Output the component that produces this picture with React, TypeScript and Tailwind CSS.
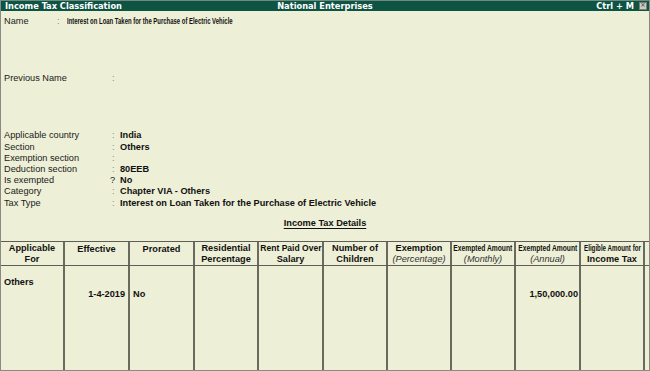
import React from "react";

const Row = ({ label, sep = ":", value }: { label: string; sep?: string; value?: string }) => (
  <div className="flex h-[11.2px] items-center leading-[11.2px]">
    <div className="w-[108px] shrink-0 text-[#1a1a1a]">{label}</div>
    <div className={`w-[8px] shrink-0 ${sep === "?" ? "-ml-[2px] mr-[2px] text-[#1a1a1a]" : "text-[#8a8a80]"}`}>{sep}</div>
    <div className="font-bold whitespace-nowrap text-[#111]">{value}</div>
  </div>
);

const Cond = ({ children, scale }: { children: React.ReactNode; scale: string }) => (
  <span className={`inline-block whitespace-nowrap text-[8.6px] origin-center ${scale}`}>{children}</span>
);

export default function App() {
  const colW = ["w-[64px]", "w-[65px]", "w-[65px]", "w-[64px]", "w-[65px]", "w-[64px]", "w-[64px]", "w-[64px]", "w-[65px]", "w-[64px]"];
  const headers: [React.ReactNode, React.ReactNode][] = [
    [<span>Applicable</span>, <span>For</span>],
    [<span>Effective</span>, null],
    [<span>Prorated</span>, null],
    [<span>Residential</span>, <span>Percentage</span>],
    [<span className="inline-block whitespace-nowrap scale-x-[0.93]">Rent Paid Over</span>, <span>Salary</span>],
    [<span>Number of</span>, <span>Children</span>],
    [<span>Exemption</span>, <span className="italic font-normal text-[#333]">(Percentage)</span>],
    [<Cond scale="scale-x-[0.78]">Exempted Amount</Cond>, <span className="italic font-normal text-[#333]">(Monthly)</span>],
    [<Cond scale="scale-x-[0.78]">Exempted Amount</Cond>, <span className="italic font-normal text-[#333]">(Annual)</span>],
    [<Cond scale="scale-x-[0.72]">Eligible Amount for</Cond>, <span>Income Tax</span>],
  ];

  return (
    <div className="w-[650px] h-[371px] overflow-hidden bg-[#edefd6] font-['Liberation_Sans',Arial,sans-serif] text-[9.2px] text-[#111] flex flex-col border-l border-r border-b border-[#8a8a82]">
      {/* Title bar */}
      <div className="h-[11px] shrink-0 bg-[#0d5444] border-t border-[#6d8a80] flex items-center text-white font-bold font-['DejaVu_Sans_Condensed','DejaVu_Sans',sans-serif] text-[9.2px] leading-none relative">
        <div className="pl-[4px]">Income Tax Classification</div>
        <div className="absolute left-0 right-0 text-center pointer-events-none">National Enterprises</div>
        <div className="ml-auto flex items-center">
          <span className="mr-[5px]">Ctrl + M</span>
          <span className="w-[8px] h-[8px] mr-[2px] bg-[#c9cbc4] border border-[#7b7d78] flex items-center justify-center text-[#3a3a3a] text-[7px] leading-none font-normal">×</span>
        </div>
      </div>

      {/* Form */}
      <div className="pl-[3px] pt-[5px]">
        <div className="flex h-[11.2px] items-center leading-[11.2px]">
          <div className="w-[53px] shrink-0 text-[#1a1a1a]">Name</div>
          <div className="w-[10px] shrink-0 text-[#8a8a80]">:</div>
          <span className="inline-block whitespace-nowrap font-bold text-[9px] origin-left scale-x-[0.66]">
            Interest on Loan Taken for the Purchase of Electric Vehicle
          </span>
        </div>
        <div className="mt-[46px]">
          <Row label="Previous Name" />
        </div>
        <div className="mt-[46px]">
          <Row label="Applicable country" value="India" />
          <Row label="Section" value="Others" />
          <Row label="Exemption section" />
          <Row label="Deduction section" value="80EEB" />
          <Row label="Is exempted" sep="?" value="No" />
          <Row label="Category" value="Chapter VIA - Others" />
          <Row label="Tax Type" value="Interest on Loan Taken for the Purchase of Electric Vehicle" />
        </div>
      </div>

      <div className="mt-[9.5px] flex justify-center">
        <span className="font-bold underline underline-offset-[2px] leading-[11px]">Income Tax Details</span>
      </div>

      {/* Table */}
      <div className="mt-[12px] flex-1 flex flex-col border-t border-[#5e5e56]">
        <div className="flex h-[24px] border-b border-[#5e5e56] font-bold">
          {headers.map(([a, b], i) => (
            <div key={i} className={`${colW[i]} shrink-0 border-r-2 border-[#6a6a5e] flex flex-col items-center justify-center leading-[10.8px] pt-[1px] ${b ? "" : "self-stretch justify-start pt-[2px]"}`}>
              <div className="flex justify-center w-full whitespace-nowrap">{a}</div>
              {b && <div className="flex justify-center w-full whitespace-nowrap">{b}</div>}
            </div>
          ))}
          <div className="flex-1" />
        </div>
        <div className="flex flex-1 font-bold leading-[11.5px]">
          {colW.map((w, i) => (
            <div key={i} className={`${w} shrink-0 border-r-2 border-[#6a6a5e] pt-[11px] ${i === 1 ? "text-right pr-[3px]" : i === 8 ? "text-right pr-[1px]" : "pl-[3px]"}`}>
              <div className="h-[11.5px]">{i === 0 ? "Others" : ""}</div>
              <div className="h-[11.5px] whitespace-nowrap">
                {i === 1 ? "1-4-2019" : i === 2 ? "No" : i === 8 ? "1,50,000.00" : ""}
              </div>
            </div>
          ))}
          <div className="flex-1" />
        </div>
      </div>
    </div>
  );
}
